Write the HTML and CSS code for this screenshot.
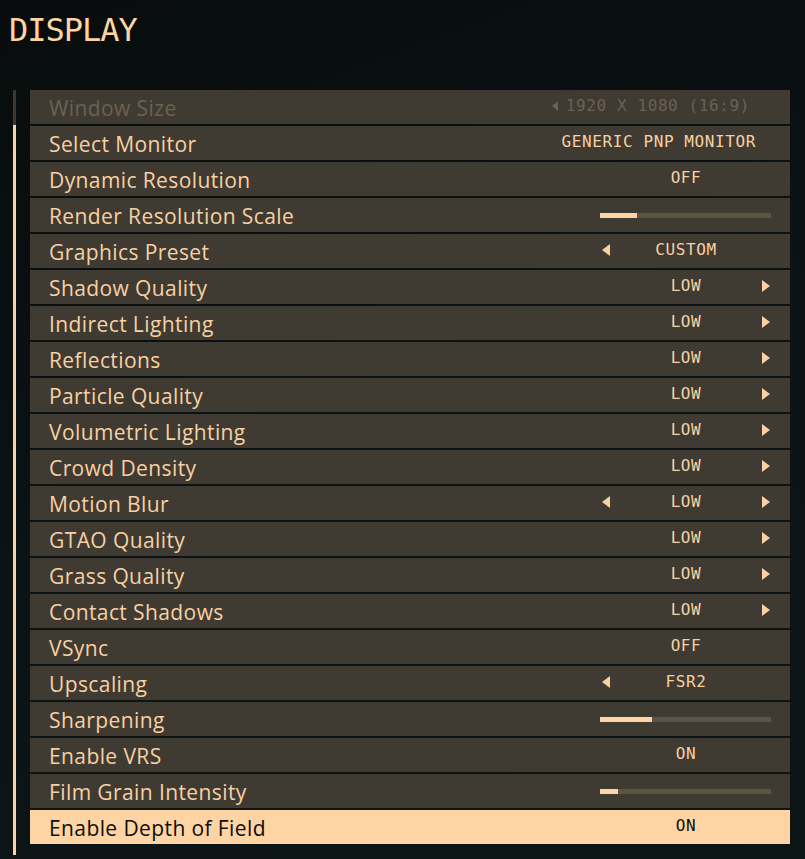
FILE: index.html
```html
<!DOCTYPE html>
<html>
<head>
<meta charset="utf-8">
<link rel="stylesheet" href="styles.css">
</head>
<body>
<h1 class="title">DISPLAY</h1>
<div class="panel">
  <div class="scrollbar"><div class="thumb"></div></div>
  <div class="list">
    <div class="row disabled">
      <span class="label">Window Size</span>
      <div class="value">
        <div class="wide-window"><span class="arrow-l small"></span><span class="text">1920 X 1080 (16:9)</span></div>
      </div>
    </div>
    <div class="row">
      <span class="label">Select Monitor</span>
      <div class="value"><span class="text wide">GENERIC PNP MONITOR</span></div>
    </div>
    <div class="row">
      <span class="label">Dynamic Resolution</span>
      <div class="value"><span class="text">OFF</span></div>
    </div>
    <div class="row">
      <span class="label">Render Resolution Scale</span>
      <div class="value"><div class="slider"><div class="fill" style="width:21.5%"></div></div></div>
    </div>
    <div class="row">
      <span class="label">Graphics Preset</span>
      <div class="value"><span class="arrow-l"></span><span class="text">CUSTOM</span></div>
    </div>
    <div class="row">
      <span class="label">Shadow Quality</span>
      <div class="value"><span class="text">LOW</span><span class="arrow-r"></span></div>
    </div>
    <div class="row">
      <span class="label">Indirect Lighting</span>
      <div class="value"><span class="text">LOW</span><span class="arrow-r"></span></div>
    </div>
    <div class="row">
      <span class="label">Reflections</span>
      <div class="value"><span class="text">LOW</span><span class="arrow-r"></span></div>
    </div>
    <div class="row">
      <span class="label">Particle Quality</span>
      <div class="value"><span class="text">LOW</span><span class="arrow-r"></span></div>
    </div>
    <div class="row">
      <span class="label">Volumetric Lighting</span>
      <div class="value"><span class="text">LOW</span><span class="arrow-r"></span></div>
    </div>
    <div class="row">
      <span class="label">Crowd Density</span>
      <div class="value"><span class="text">LOW</span><span class="arrow-r"></span></div>
    </div>
    <div class="row">
      <span class="label">Motion Blur</span>
      <div class="value"><span class="arrow-l"></span><span class="text">LOW</span><span class="arrow-r"></span></div>
    </div>
    <div class="row">
      <span class="label">GTAO Quality</span>
      <div class="value"><span class="text">LOW</span><span class="arrow-r"></span></div>
    </div>
    <div class="row">
      <span class="label">Grass Quality</span>
      <div class="value"><span class="text">LOW</span><span class="arrow-r"></span></div>
    </div>
    <div class="row">
      <span class="label">Contact Shadows</span>
      <div class="value"><span class="text">LOW</span><span class="arrow-r"></span></div>
    </div>
    <div class="row">
      <span class="label">VSync</span>
      <div class="value"><span class="text">OFF</span></div>
    </div>
    <div class="row">
      <span class="label">Upscaling</span>
      <div class="value"><span class="arrow-l"></span><span class="text">FSR2</span></div>
    </div>
    <div class="row">
      <span class="label">Sharpening</span>
      <div class="value"><div class="slider"><div class="fill" style="width:30.5%"></div></div></div>
    </div>
    <div class="row">
      <span class="label">Enable VRS</span>
      <div class="value"><span class="text">ON</span></div>
    </div>
    <div class="row">
      <span class="label">Film Grain Intensity</span>
      <div class="value"><div class="slider"><div class="fill" style="width:10.5%"></div></div></div>
    </div>
    <div class="row selected">
      <span class="label">Enable Depth of Field</span>
      <div class="value"><span class="text">ON</span></div>
    </div>
  </div>
</div>
</body>
</html>
```

FILE: styles.css
```css
html, body {
  margin: 0;
  padding: 0;
}
body {
  width: 805px;
  height: 859px;
  overflow: hidden;
  background: linear-gradient(160deg, #080c0d 0%, #0b1213 45%, #0d1617 100%);
  color: #fdd3a3;
}
.title {
  margin: 12px 0 0 9px;
  height: 36px;
  font-family: "DejaVu Sans Mono", monospace;
  font-weight: normal;
  font-size: 32px;
  line-height: 36px;
  letter-spacing: -1px;
  color: #fdd4a3;
}
.panel {
  display: flex;
  gap: 14px;
  margin-top: 42px;
  padding-left: 13px;
}
.scrollbar {
  width: 3px;
  height: 765px;
  background: #3d3932;
  display: flex;
  flex-direction: column;
}
.thumb {
  margin-top: 35px;
  flex: 1;
  background: #fdd3a3;
}
.list {
  width: 760px;
  display: flex;
  flex-direction: column;
  gap: 2px;
}
.row {
  height: 34px;
  background: #3f3b33;
  display: grid;
  grid-template-columns: 1fr 180px;
  padding-right: 14px;
  align-items: center;
}
.label {
  padding-left: 19px;
  padding-top: 2px;
  font-family: "Open Sans", sans-serif;
  font-size: 21px;
  font-weight: 500;
  letter-spacing: 0.4px;
  color: #f8d0a2;
}
.value {
  display: grid;
  grid-template-columns: 20px minmax(0, 1fr) 20px;
  align-items: center;
  height: 34px;
  font-family: "DejaVu Sans Mono", monospace;
  font-size: 16px;
  letter-spacing: 0.6px;
  color: #f8d0a2;
}
.value .text {
  grid-column: 2;
  justify-self: center;
  white-space: nowrap;
  padding-bottom: 3px;
}
.value .text.wide {
  justify-self: end;
}
.arrow-l, .arrow-r {
  width: 0;
  height: 0;
  justify-self: center;
  border-top: 6px solid transparent;
  border-bottom: 6px solid transparent;
  margin-bottom: 2px;
}
.arrow-l {
  grid-column: 1;
  border-right: 8px solid #f8d0a2;
}
.arrow-r {
  grid-column: 3;
  border-left: 8px solid #f8d0a2;
}
.slider {
  grid-column: 1 / -1;
  margin: 0 5px 0 4px;
  height: 5px;
  background: #5e5446;
}
.fill {
  height: 100%;
  background: #fdd4a5;
}
.wide-window {
  grid-column: 2;
  justify-self: end;
  display: flex;
  align-items: center;
  gap: 8px;
  margin-right: 6px;
  white-space: nowrap;
}
.wide-window .text {
  padding-bottom: 3px;
}
.arrow-l.small {
  border-top-width: 5px;
  border-bottom-width: 5px;
  border-right: 6px solid #6a5f50;
}
.disabled .label,
.disabled .value {
  color: #6c6152;
}
.selected {
  background: #fed4a4;
}
.selected .label,
.selected .value {
  color: #0d0d0b;
}
```
